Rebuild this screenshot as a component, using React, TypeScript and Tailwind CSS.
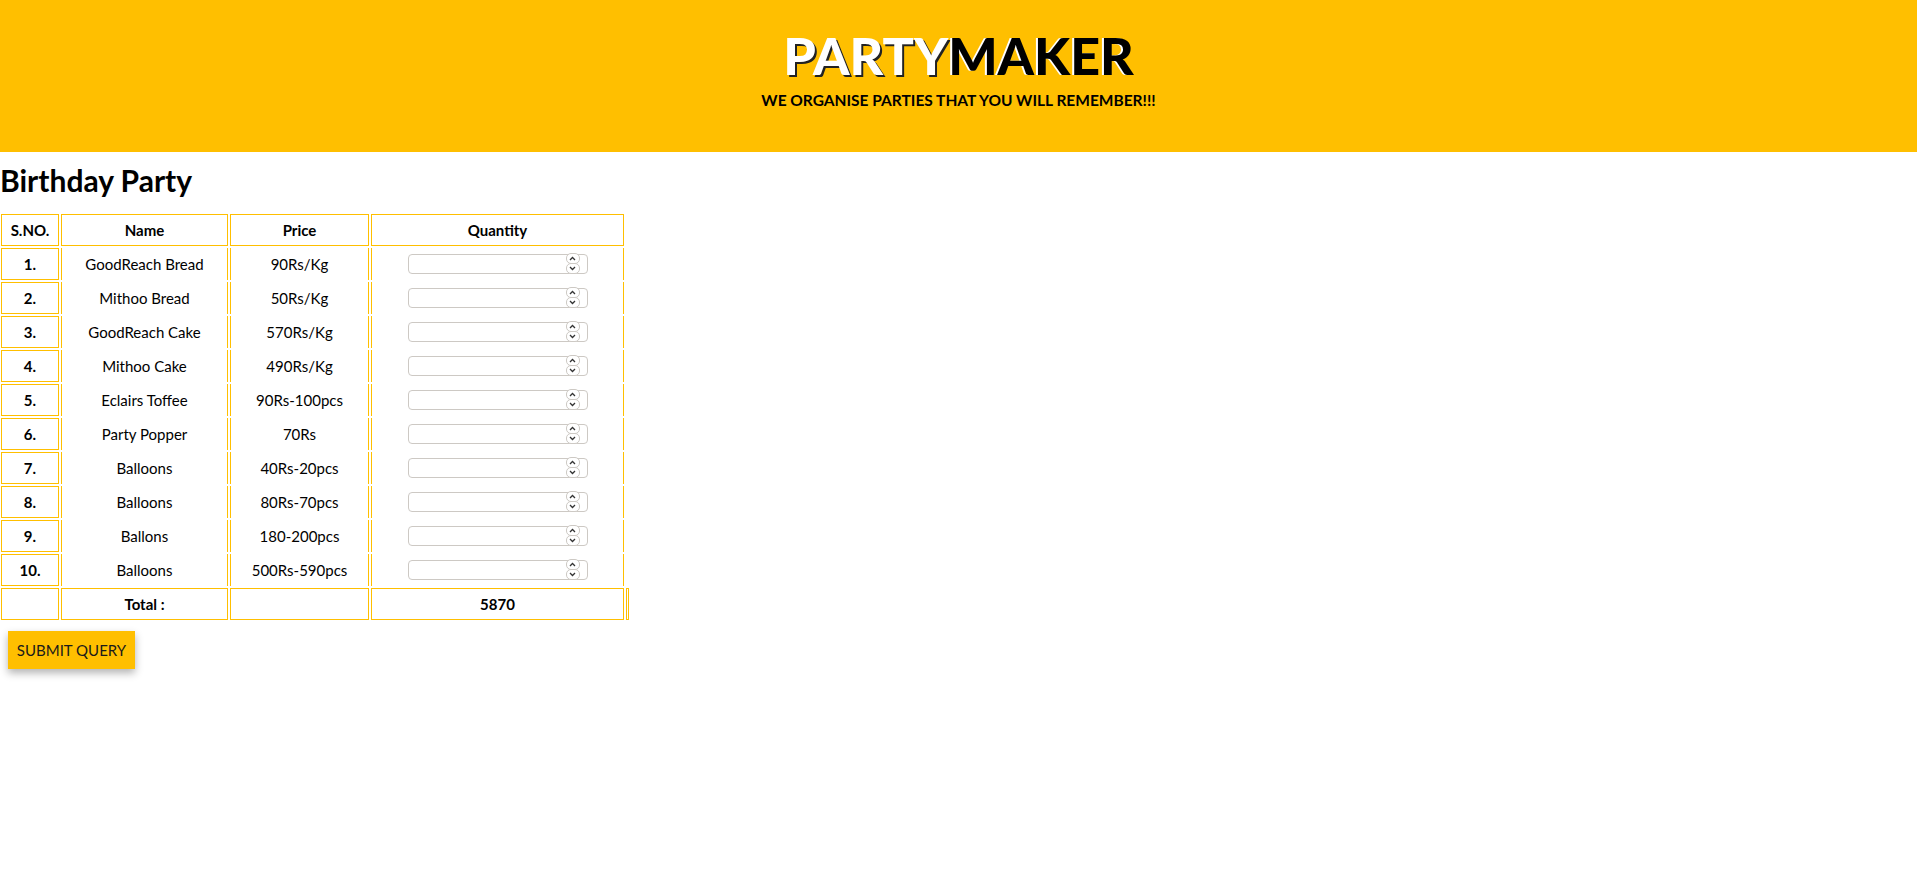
import React from "react"

const items = [
  ["1.", "GoodReach Bread", "90Rs/Kg"],
  ["2.", "Mithoo Bread", "50Rs/Kg"],
  ["3.", "GoodReach Cake", "570Rs/Kg"],
  ["4.", "Mithoo Cake", "490Rs/Kg"],
  ["5.", "Eclairs Toffee", "90Rs-100pcs"],
  ["6.", "Party Popper", "70Rs"],
  ["7.", "Balloons", "40Rs-20pcs"],
  ["8.", "Balloons", "80Rs-70pcs"],
  ["9.", "Ballons", "180-200pcs"],
  ["10.", "Balloons", "500Rs-590pcs"],
]

function QtyInput() {
  return (
    <div className="relative mx-auto h-[20px] w-[180px] rounded-[4px] border border-[#cdc9c4] bg-white">
      <div className="absolute right-[7px] top-[-2px] flex flex-col">
        <span className="flex h-[11px] w-[14px] items-center justify-center rounded-[5px] border border-[#cdc9c4] bg-white">
          <svg width="7" height="5" viewBox="0 0 7 5" fill="none">
            <path d="M1 4 L3.5 1.5 L6 4" stroke="#333" strokeWidth="1.3" />
          </svg>
        </span>
        <span className="-mt-px flex h-[11px] w-[14px] items-center justify-center rounded-[5px] border border-[#cdc9c4] bg-white">
          <svg width="7" height="5" viewBox="0 0 7 5" fill="none">
            <path d="M1 1 L3.5 3.5 L6 1" stroke="#333" strokeWidth="1.3" />
          </svg>
        </span>
      </div>
    </div>
  )
}

export default function App() {
  return (
    <div className="min-h-screen bg-white font-['Lato',sans-serif] text-black">
      {/* HEADER */}
      <header className="flex h-[152px] flex-col items-center bg-[#ffbf00] pt-[24px]">
        <h1 className="text-[52px] font-black leading-[62px]">
          <span className="text-white [text-shadow:2px_2px_0_#222]">PARTY</span>
          <span className="text-black [text-shadow:-2px_0_0_#fff]">MAKER</span>
        </h1>
        <p className="mt-[5px] text-[15.5px] font-bold leading-[18px]">
          WE ORGANISE PARTIES THAT YOU WILL REMEMBER!!!
        </p>
      </header>

      <h2 className="mt-[10px] text-[30px] font-bold leading-[36px]">Birthday Party</h2>

      <form className="mt-[14px]">
        <table className="-ml-px border-separate border-spacing-[2px] text-[15px]">
          <thead>
            <tr>
              <th className="h-[32px] w-[58px] border border-[#ffbf00] font-bold">S.NO.</th>
              <th className="h-[32px] w-[167px] border border-[#ffbf00] font-bold">Name</th>
              <th className="h-[32px] w-[139px] border border-[#ffbf00] font-bold">Price</th>
              <th className="h-[32px] w-[253px] border border-[#ffbf00] font-bold">Quantity</th>
            </tr>
          </thead>
          <tbody>
            {items.map(([no, name, price]) => (
              <tr key={no}>
                <th className="h-[32px] border border-[#ffbf00] font-bold">{no}</th>
                <td className="h-[32px] border-x border-[#ffbf00] text-center">{name}</td>
                <td className="h-[32px] border-x border-[#ffbf00] text-center">{price}</td>
                <td className="h-[32px] border-x border-[#ffbf00] text-center">
                  <QtyInput />
                </td>
              </tr>
            ))}
            <tr>
              <th className="h-[32px] border border-[#ffbf00]"></th>
              <th className="h-[32px] border border-[#ffbf00] font-bold">Total :</th>
              <th className="h-[32px] border border-[#ffbf00]"></th>
              <th className="h-[32px] border border-[#ffbf00] font-bold">5870</th>
              <th className="h-[32px] w-[3px] border border-[#ffbf00] p-0"></th>
            </tr>
          </tbody>
        </table>

        <button
          type="submit"
          className="ml-[8px] mt-[9px] h-[38px] w-[127px] bg-[#ffbf00] text-[15px] text-[#1a1a1a] shadow-[0_4px_8px_rgba(0,0,0,0.3)]"
        >
          SUBMIT QUERY
        </button>
      </form>
    </div>
  )
}
